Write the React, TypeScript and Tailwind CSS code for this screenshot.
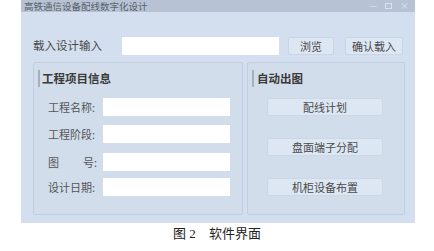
import React from "react";

const cjk = { fontFamily: '"Noto Sans CJK SC", "Noto Sans", sans-serif' };
const serif = { fontFamily: '"Liberation Serif", "Noto Sans CJK SC", serif' };

function Field({ label, mt }: { label: React.ReactNode; mt: string }) {
  return (
    <div className={`flex items-center ${mt}`}>
      <div className="w-[69px] pl-[14px] text-[11px] leading-[18px] text-[#555] whitespace-nowrap">{label}</div>
      <div className="w-[127px] h-[18px] bg-white" />
    </div>
  );
}

function ActionButton({ text, mt }: { text: string; mt: string }) {
  return (
    <div
      className={`ml-[19px] w-[116px] h-[18px] bg-[#dde7f3] border border-[#cbd6e6] rounded-[2px] flex items-center justify-center text-[11px] text-[#4a4a4a] ${mt}`}
    >
      {text}
    </div>
  );
}

export default function App() {
  return (
    <div className="w-[434px] h-[251px] bg-white overflow-hidden" style={cjk}>
      <div className="ml-[21px] w-[394px] h-[223px] bg-[#d3deee] flex flex-col">
        <div className="h-[12px] bg-[#b7c3d5] flex items-center justify-between pl-[3px] pr-[6px]">
          <span className="text-[9.5px] leading-[11px] text-[#5a5f6a]">高铁通信设备配线数字化设计</span>
          <span className="flex items-center gap-[8px] text-[9px] leading-[10px] text-[#dbe2ec]">
            <span>—</span>
            <span className="w-[7px] h-[6px] border border-[#dbe2ec]" />
            <span>×</span>
          </span>
        </div>

        <div className="mt-[25px] flex items-center h-[18px]">
          <div className="w-[101px] pl-[12px] text-[11.5px] text-[#4a4a4a] whitespace-nowrap">载入设计输入</div>
          <div className="w-[157px] h-[18px] bg-white" />
          <div className="ml-[9px] w-[46px] h-[18px] bg-[#dde7f3] border border-[#c9d4e4] rounded-[2px] flex items-center justify-center text-[11px] text-[#4a4a4a]">
            浏览
          </div>
          <div className="ml-[11px] w-[58px] h-[18px] bg-[#dde7f3] border border-[#c9d4e4] rounded-[2px] flex items-center justify-center text-[11px] text-[#4a4a4a]">
            确认载入
          </div>
        </div>

        <div className="mt-[7px] flex pl-[12px] gap-[4px]">
          <div className="w-[210px] h-[153px] border border-[#c2cee0] rounded-[2px] bg-[#d2ddec] flex flex-col">
            <div className="mt-[7px] ml-[4px] flex items-center h-[17px]">
              <div className="w-[2px] h-[17px] bg-[#a7afbb]" />
              <span className="ml-[2px] text-[11.5px] font-bold text-[#3a3a3a]">工程项目信息</span>
            </div>
            <Field label="工程名称:" mt="mt-[11px]" />
            <Field label="工程阶段:" mt="mt-[9px]" />
            <Field
              label={
                <span className="flex justify-between w-[49px]">
                  <span>图</span>
                  <span>号:</span>
                </span>
              }
              mt="mt-[10px]"
            />
            <Field label="设计日期:" mt="mt-[7px]" />
          </div>

          <div className="w-[158px] h-[153px] border border-[#c2cee0] rounded-[2px] bg-[#d2ddec] flex flex-col">
            <div className="mt-[7px] ml-[4px] flex items-center h-[17px]">
              <div className="w-[2px] h-[17px] bg-[#a7afbb]" />
              <span className="ml-[3px] text-[11.5px] font-bold text-[#3a3a3a]">自动出图</span>
            </div>
            <ActionButton text="配线计划" mt="mt-[11px]" />
            <ActionButton text="盘面端子分配" mt="mt-[22px]" />
            <ActionButton text="机柜设备布置" mt="mt-[22px]" />
          </div>
        </div>
      </div>

      <div className="mt-[3px] flex justify-center text-[13px] leading-[16px] text-[#222]" style={serif}>
        <span>图 2</span>
        <span className="ml-[13px]">软件界面</span>
      </div>
    </div>
  );
}
